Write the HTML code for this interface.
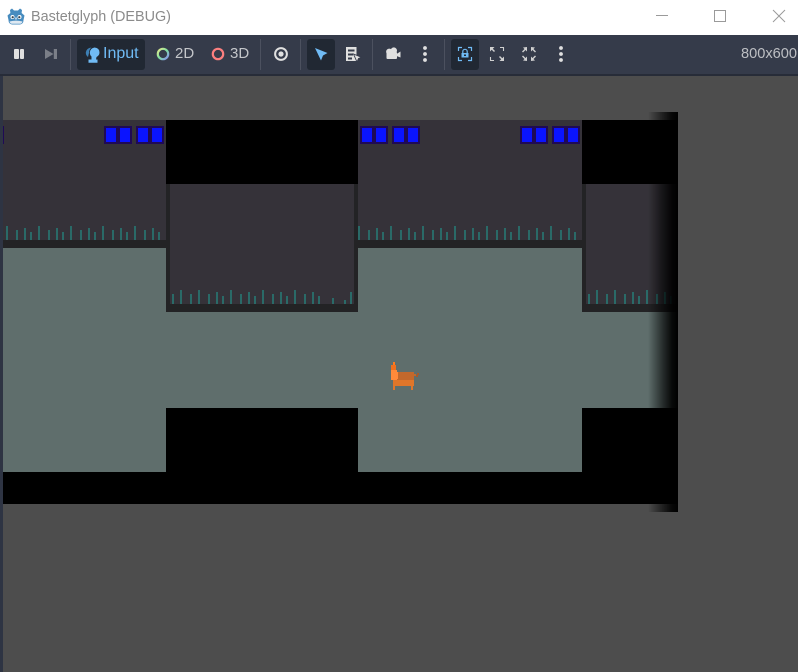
<!DOCTYPE html>
<html><head><meta charset="utf-8">
<style>
html,body{margin:0;padding:0;background:#4d4d4d}
body{width:798px;height:672px;position:relative;overflow:hidden;font-family:"Liberation Sans",sans-serif}
div,span,svg{position:absolute;display:block}
.t{white-space:nowrap;line-height:20px;font-size:15px;color:#c4c6ca}
.b{background:#1f0a55;width:28px;height:18px;top:126px}
.b:before,.b:after{content:"";position:absolute;top:2px;width:10px;height:14px;background:#0a14ff}
.b:before{left:2px}.b:after{left:16px}
.sep{top:39px;width:1px;height:31px;background:#4c515f}
.act{top:39px;height:31px;background:#212833;border-radius:3px}
</style></head><body>
<div style="left:0;top:0;width:798px;height:35px;background:#fff"></div>
<svg style="left:7px;top:7px" width="18" height="18" viewBox="0 0 18 18"><path d="M5 1.500 7 3.500H11L13 1.500 15 3 14.600 6 17.500 8.500 16.500 13Q16.500 17 13 17.500H5Q1.500 17 1.500 13L.5 8.500 3.400 6 3 3Z" fill="#478cbf"/><path d="M2.500 14.500Q9 12.800 15.500 14.500Q15 16.600 13 16.800H5Q3 16.600 2.500 14.500Z" fill="#dfe9f2"/><circle cx="5.500" cy="10" r="2" fill="#fff"/><circle cx="12.500" cy="10" r="2" fill="#fff"/><circle cx="5.700" cy="10.200" r="1.100" fill="#33414e"/><circle cx="12.300" cy="10.200" r="1.100" fill="#33414e"/><rect x="8.400" y="10.500" width="1.200" height="2" fill="#fff"/></svg>
<div class="t" style="left:31px;top:7px;font-size:14.4px;color:#8b8b8b">Bastetglyph (DEBUG)</div>
<svg style="left:650px;top:5px" width="140" height="22" viewBox="0 0 140 22" fill="none" stroke="#9a9a9a" stroke-width="1"><path d="M6 10.500H18"/><rect x="64.500" y="5.500" width="11" height="11"/><path d="M123 5 135 17M135 5 123 17"/></svg>

<div style="left:0;top:35px;width:798px;height:39px;background:#353b4a"></div>
<div style="left:0;top:74px;width:798px;height:2px;background:#272c38"></div>
<div style="left:0;top:76px;width:3px;height:596px;background:#2e3443"></div>

<div style="left:14px;top:49px;width:4.500px;height:10px;background:#e0e0e0;border-radius:1px"></div>
<div style="left:19.500px;top:49px;width:4.500px;height:10px;background:#e0e0e0;border-radius:1px"></div>
<svg style="left:45px;top:49px" width="12" height="10" viewBox="0 0 12 10"><path d="M0 0 8.500 5 0 10Z M8.800 0H12V10H8.800Z" fill="#7b7f88"/></svg>
<div class="sep" style="left:70px"></div>
<div class="act" style="left:77px;width:68px"></div>
<svg style="left:85px;top:47px" width="15" height="16" viewBox="0 0 15 16"><path d="M6.500 .5Q1.500 1 .8 5.500Q.8 8.500 3 10L4 6Q4 2.500 6.500 .5Z" fill="#3d80b5"/><path d="M9.500 .5Q14.500 1 14.500 5.500Q14.500 8.500 11.500 10L11 12.500H12.500V15.700H3.500V12.500H6.500L6.500 9.500Q4.800 8 4.800 5.500Q5.200 1.200 9.500 .5Z" fill="#70bbf5"/></svg>
<div class="t" style="left:103px;top:44px;color:#70bbf5;font-size:16px">Input</div>
<svg style="left:156px;top:47px" width="14" height="14" viewBox="0 0 14 14"><defs><linearGradient id="g" x1="0" y1="0" x2="1" y2="1"><stop offset="0" stop-color="#e8e98a"/><stop offset=".5" stop-color="#7fe0a0"/><stop offset="1" stop-color="#8a8cf5"/></linearGradient></defs><circle cx="7" cy="7" r="5.200" fill="none" stroke="url(#g)" stroke-width="2.200"/></svg>
<div class="t" style="left:175px;top:44px;font-size:15px">2D</div>
<svg style="left:211px;top:47px" width="14" height="14" viewBox="0 0 14 14"><circle cx="7" cy="7" r="5.200" fill="none" stroke="#fc7f7f" stroke-width="2.200"/></svg>
<div class="t" style="left:230px;top:44px;font-size:15px">3D</div>
<div class="sep" style="left:260px"></div>
<svg style="left:274px;top:47px" width="14" height="14" viewBox="0 0 14 14"><circle cx="7" cy="7" r="5.900" fill="none" stroke="#e0e0e0" stroke-width="2"/><circle cx="7" cy="7" r="2.600" fill="#e0e0e0"/></svg>
<div class="sep" style="left:300px"></div>
<div class="act" style="left:307px;width:28px"></div>
<svg style="left:315px;top:48px" width="13" height="13" viewBox="0 0 13 13"><path d="M0 0 12.500 5 8 7.500 6 12.500Z" fill="#70bbf5"/></svg>
<svg style="left:346px;top:47px" width="16" height="15" viewBox="0 0 16 15"><path d="M0 0H10.500V14H0ZM2 2.500V4.500H8.500V2.500ZM2 6.500V8.500H7V6.500ZM2 10.500V12.500H6V10.500Z" fill="#e0e0e0" fill-rule="evenodd"/><path d="M7.500 7 15.500 10.300 12.500 11.500 11 15Z" fill="#e0e0e0" stroke="#353b4a" stroke-width=".9"/></svg>
<div class="sep" style="left:372px"></div>
<svg style="left:386px;top:47px" width="15" height="13" viewBox="0 0 15 13"><circle cx="3.300" cy="4.800" r="3.200" fill="#e0e0e0"/><circle cx="7.800" cy="3.600" r="3.200" fill="#e0e0e0"/><rect x=".5" y="5" width="10.500" height="7" rx="1" fill="#e0e0e0"/><path d="M10.500 7 14.500 4.500V10.500L10.500 9Z" fill="#e0e0e0"/></svg>
<svg style="left:421px;top:46px" width="8" height="16" viewBox="0 0 8 16"><g fill="#e0e0e0"><circle cx="4" cy="2" r="1.900"/><circle cx="4" cy="8" r="1.900"/><circle cx="4" cy="14" r="1.900"/></g></svg>
<div class="sep" style="left:444px"></div>
<div class="act" style="left:451px;width:28px"></div>
<svg style="left:457px;top:46px" width="16" height="16" viewBox="0 0 16 16"><path d="M1.500 5V1.500H5M11 1.500H14.500V5M14.500 11V14.500H11M5 14.500H1.500V11" fill="none" stroke="#70bbf5" stroke-width="1.200"/><path d="M5.800 7V5.500A2.200 2.200 0 0 1 10.200 5.500V7" fill="none" stroke="#70bbf5" stroke-width="1.200"/><path d="M4.500 7H11.500V11.500H4.500ZM7 8.500V10H9V8.500Z" fill="#70bbf5" fill-rule="evenodd"/></svg>
<svg style="left:489px;top:46px" width="16" height="16" viewBox="0 0 16 16"><g fill="none" stroke="#d0d0d0" stroke-width="1.100"><path d="M11 1.500H14.500V5M1.500 11V14.500H5"/></g><path d="M1 1H5.500L3.800 2.700 6 5 5 6 2.700 3.800 1 5.500ZM15 15H10.500L12.200 13.300 10 11 11 10 13.300 12.200 15 10.500Z" fill="#d0d0d0"/></svg>
<svg style="left:521px;top:46px" width="16" height="16" viewBox="0 0 16 16"><path d="M6 1V5.500L4.500 4 2 6.500 1 5.500 3.500 3 2 1.500ZM10 15V10.500L11.500 12 14 9.500 15 10.500 12.500 13 14 14.500ZM10 1V5.500L11.500 4 14 6.500 15 5.500 12.500 3 14 1.500ZM6 15V10.500L4.500 12 2 9.500 1 10.500 3.500 13 2 14.500Z" fill="#d0d0d0"/></svg>
<svg style="left:557px;top:46px" width="8" height="16" viewBox="0 0 8 16"><g fill="#e0e0e0"><circle cx="4" cy="2" r="1.900"/><circle cx="4" cy="8" r="1.900"/><circle cx="4" cy="14" r="1.900"/></g></svg>
<div class="t" style="left:741px;top:44px;font-size:14.6px;color:#bdbfc3">800x600</div>

<!-- scene -->
<svg style="left:0;top:0" width="798" height="672" viewBox="0 0 798 672" shape-rendering="crispEdges">
<defs>
<linearGradient id="sh" x1="0" x2="1" y1="0" y2="0"><stop offset="0" stop-color="#000" stop-opacity="0"/><stop offset=".5" stop-color="#000" stop-opacity=".6"/><stop offset=".8" stop-color="#000" stop-opacity=".92"/><stop offset="1" stop-color="#000" stop-opacity="1"/></linearGradient>
<g id="gr"><rect x="0" y="-14" width="2" height="14"/><rect x="10" y="-10" width="2" height="10"/><rect x="18" y="-12" width="2" height="12"/><rect x="24" y="-8" width="2" height="8"/></g>
</defs>
<rect x="3" y="120" width="675" height="384" fill="#000"/>
<rect x="3" y="248" width="163" height="224" fill="#5f6e6c"/>
<rect x="358" y="248" width="224" height="224" fill="#5f6e6c"/>
<rect x="3" y="312" width="675" height="96" fill="#5f6e6c"/>
<rect x="3" y="120" width="163" height="120" fill="#353239"/>
<rect x="358" y="120" width="224" height="120" fill="#353239"/>
<rect x="3" y="240" width="163" height="8" fill="#232325"/>
<rect x="358" y="240" width="224" height="8" fill="#232325"/>
<rect x="166" y="184" width="192" height="128" fill="#232325"/>
<rect x="170" y="184" width="184" height="120" fill="#353239"/>
<rect x="582" y="184" width="96" height="128" fill="#232325"/>
<rect x="586" y="184" width="92" height="120" fill="#353239"/>
<g fill="#2a6a68">
<use href="#gr" x="6" y="240"/><use href="#gr" x="38" y="240"/><use href="#gr" x="70" y="240"/><use href="#gr" x="102" y="240"/><use href="#gr" x="134" y="240"/>
<use href="#gr" x="358" y="240"/><use href="#gr" x="390" y="240"/><use href="#gr" x="422" y="240"/><use href="#gr" x="454" y="240"/><use href="#gr" x="486" y="240"/><use href="#gr" x="518" y="240"/><use href="#gr" x="550" y="240"/>
<rect x="172" y="294" width="2" height="10"/><rect x="180" y="290" width="2" height="14"/><rect x="190" y="294" width="2" height="10"/><rect x="198" y="290" width="2" height="14"/><rect x="208" y="294" width="2" height="10"/><rect x="216" y="292" width="2" height="12"/><rect x="222" y="296" width="2" height="8"/>
<use href="#gr" x="230" y="304"/><use href="#gr" x="262" y="304"/><use href="#gr" x="294" y="304"/>
<rect x="332" y="298" width="2" height="6"/><rect x="344" y="300" width="2" height="4"/><rect x="350" y="292" width="2" height="12"/>
<rect x="588" y="294" width="2" height="10"/><rect x="596" y="290" width="2" height="14"/><rect x="606" y="294" width="2" height="10"/><rect x="614" y="290" width="2" height="14"/><rect x="624" y="294" width="2" height="10"/><rect x="632" y="292" width="2" height="12"/><rect x="638" y="296" width="2" height="8"/>
<use href="#gr" x="646" y="304"/>
</g>
<rect x="3" y="126" width="1" height="18" fill="#1f0a55"/>
<!-- cat -->
<rect x="396" y="372" width="18" height="8" fill="#c2682c"/>
<rect x="393" y="380" width="21" height="6" fill="#e0762a"/>
<rect x="393" y="386" width="2" height="4" fill="#e0762a"/>
<rect x="411" y="386" width="2" height="4" fill="#e0762a"/>
<rect x="414" y="374" width="2" height="2" fill="#c2682c"/><rect x="416" y="375" width="2" height="2" fill="#a65a2c"/><rect x="417" y="373" width="2" height="2" fill="#a65a2c"/>
<rect x="393" y="362" width="2" height="3" fill="#ff7a1e"/>
<rect x="391" y="365" width="5" height="5" fill="#f0701e"/>
<rect x="391" y="370" width="6" height="10" fill="#ff8a3a"/>
<rect x="397" y="372" width="1" height="7" fill="#ff8a3a"/>
<rect x="648" y="112" width="30" height="400" fill="url(#sh)"/>
</svg>
<div class="b" style="left:104px"></div><div class="b" style="left:136px"></div>
<div class="b" style="left:360px"></div><div class="b" style="left:392px"></div>
<div class="b" style="left:520px"></div><div class="b" style="left:552px"></div>
</body></html>
